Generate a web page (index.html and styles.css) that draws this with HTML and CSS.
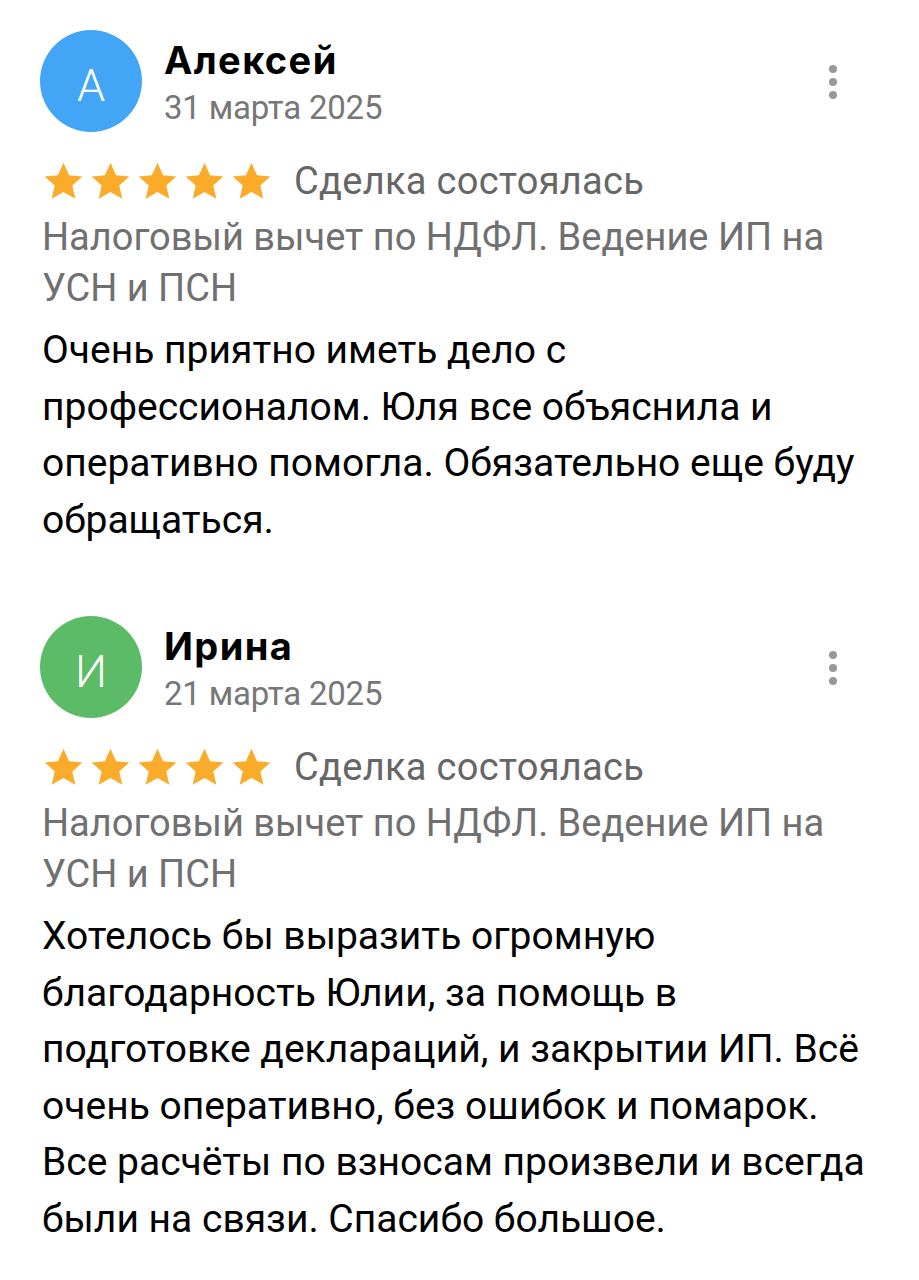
FILE: index.html
```html
<!DOCTYPE html>
<html lang="ru">
<head>
  <meta charset="UTF-8" />
  <title>Отзывы</title>
  <link rel="stylesheet" href="styles.css">
</head>
<body>
  <div class="reviews">
    <div class="review">
      <div class="head">
        <div class="avatar blue">А</div>
        <div class="who">
          <div class="name">Алексей</div>
          <div class="date">31 марта 2025</div>
        </div>
        <div class="more"><span></span><span></span><span></span></div>
      </div>
      <div class="rating">
        <div class="stars">
          <svg viewBox="0 0 24 24"><path d="M12 1.6l3.1 6.9 7.4.7-5.6 5 1.7 7.4L12 17.8l-6.6 3.8 1.7-7.4-5.6-5 7.4-.7z"/></svg>
          <svg viewBox="0 0 24 24"><path d="M12 1.6l3.1 6.9 7.4.7-5.6 5 1.7 7.4L12 17.8l-6.6 3.8 1.7-7.4-5.6-5 7.4-.7z"/></svg>
          <svg viewBox="0 0 24 24"><path d="M12 1.6l3.1 6.9 7.4.7-5.6 5 1.7 7.4L12 17.8l-6.6 3.8 1.7-7.4-5.6-5 7.4-.7z"/></svg>
          <svg viewBox="0 0 24 24"><path d="M12 1.6l3.1 6.9 7.4.7-5.6 5 1.7 7.4L12 17.8l-6.6 3.8 1.7-7.4-5.6-5 7.4-.7z"/></svg>
          <svg viewBox="0 0 24 24"><path d="M12 1.6l3.1 6.9 7.4.7-5.6 5 1.7 7.4L12 17.8l-6.6 3.8 1.7-7.4-5.6-5 7.4-.7z"/></svg>
        </div>
        <span class="deal">Сделка состоялась</span>
      </div>
      <div class="service">Налоговый вычет по НДФЛ. Ведение ИП на УСН и ПСН</div>
      <div class="text">Очень приятно иметь дело с профессионалом. Юля все объяснила и оперативно помогла. Обязательно еще буду обращаться.</div>
    </div>

    <div class="review">
      <div class="head">
        <div class="avatar green">И</div>
        <div class="who">
          <div class="name">Ирина</div>
          <div class="date">21 марта 2025</div>
        </div>
        <div class="more"><span></span><span></span><span></span></div>
      </div>
      <div class="rating">
        <div class="stars">
          <svg viewBox="0 0 24 24"><path d="M12 1.6l3.1 6.9 7.4.7-5.6 5 1.7 7.4L12 17.8l-6.6 3.8 1.7-7.4-5.6-5 7.4-.7z"/></svg>
          <svg viewBox="0 0 24 24"><path d="M12 1.6l3.1 6.9 7.4.7-5.6 5 1.7 7.4L12 17.8l-6.6 3.8 1.7-7.4-5.6-5 7.4-.7z"/></svg>
          <svg viewBox="0 0 24 24"><path d="M12 1.6l3.1 6.9 7.4.7-5.6 5 1.7 7.4L12 17.8l-6.6 3.8 1.7-7.4-5.6-5 7.4-.7z"/></svg>
          <svg viewBox="0 0 24 24"><path d="M12 1.6l3.1 6.9 7.4.7-5.6 5 1.7 7.4L12 17.8l-6.6 3.8 1.7-7.4-5.6-5 7.4-.7z"/></svg>
          <svg viewBox="0 0 24 24"><path d="M12 1.6l3.1 6.9 7.4.7-5.6 5 1.7 7.4L12 17.8l-6.6 3.8 1.7-7.4-5.6-5 7.4-.7z"/></svg>
        </div>
        <span class="deal">Сделка состоялась</span>
      </div>
      <div class="service">Налоговый вычет по НДФЛ. Ведение ИП на УСН и ПСН</div>
      <div class="text">Хотелось бы выразить огромную благодарность Юлии, за помощь в подготовке деклараций, и закрытии ИП. Всё очень оперативно, без ошибок и помарок. Все расчёты по взносам произвели и всегда были на связи. Спасибо большое.</div>
    </div>
  </div>
</body>
</html>
```

FILE: styles.css
```css
body {
  margin: 0;
  background: #fff;
  color: #000;
  font-family: Roboto, "Noto Sans", sans-serif;
}
.reviews {
  padding: 30px 44px 0 42px;
}
.review {
  margin-bottom: 68px;
}
.head {
  display: flex;
  align-items: flex-start;
}
.avatar {
  width: 102px;
  height: 102px;
  border-radius: 50%;
  flex: none;
  color: #fff;
  font-size: 45px;
  font-weight: 300;
  padding-top: 8px;
  box-sizing: border-box;
  display: flex;
  align-items: center;
  justify-content: center;
  margin-left: -2px;
}
.avatar.blue {
  background: #42a5f5;
}
.avatar.green {
  background: #5cbb66;
}
.who {
  margin-left: 22px;
  margin-top: 7px;
  flex: 1;
}
.name {
  font-family: Inter, Roboto, sans-serif;
  font-size: 38px;
  font-weight: 700;
  line-height: 46px;
  letter-spacing: 1.4px;
}
.date {
  font-size: 33px;
  line-height: 50px;
  color: #777;
  letter-spacing: -0.2px;
}
.more {
  align-self: center;
  display: flex;
  flex-direction: column;
  gap: 5px;
  margin-right: 38px;
}
.more span {
  width: 8px;
  height: 8px;
  border-radius: 50%;
  background: #999;
}
.rating {
  display: flex;
  align-items: center;
  height: 50px;
  margin-top: 23px;
}
.stars {
  display: flex;
  gap: 4px;
}
.stars svg {
  width: 43px;
  height: 43px;
  fill: #faab2a;
}
.deal {
  margin-left: 21px;
  font-size: 38px;
  color: #666;
  letter-spacing: 0.3px;
}
.service {
  margin-top: 6px;
  font-size: 38px;
  line-height: 51px;
  color: #707070;
}
.text {
  margin-top: 8px;
  font-size: 39px;
  line-height: 56.5px;
}
```
